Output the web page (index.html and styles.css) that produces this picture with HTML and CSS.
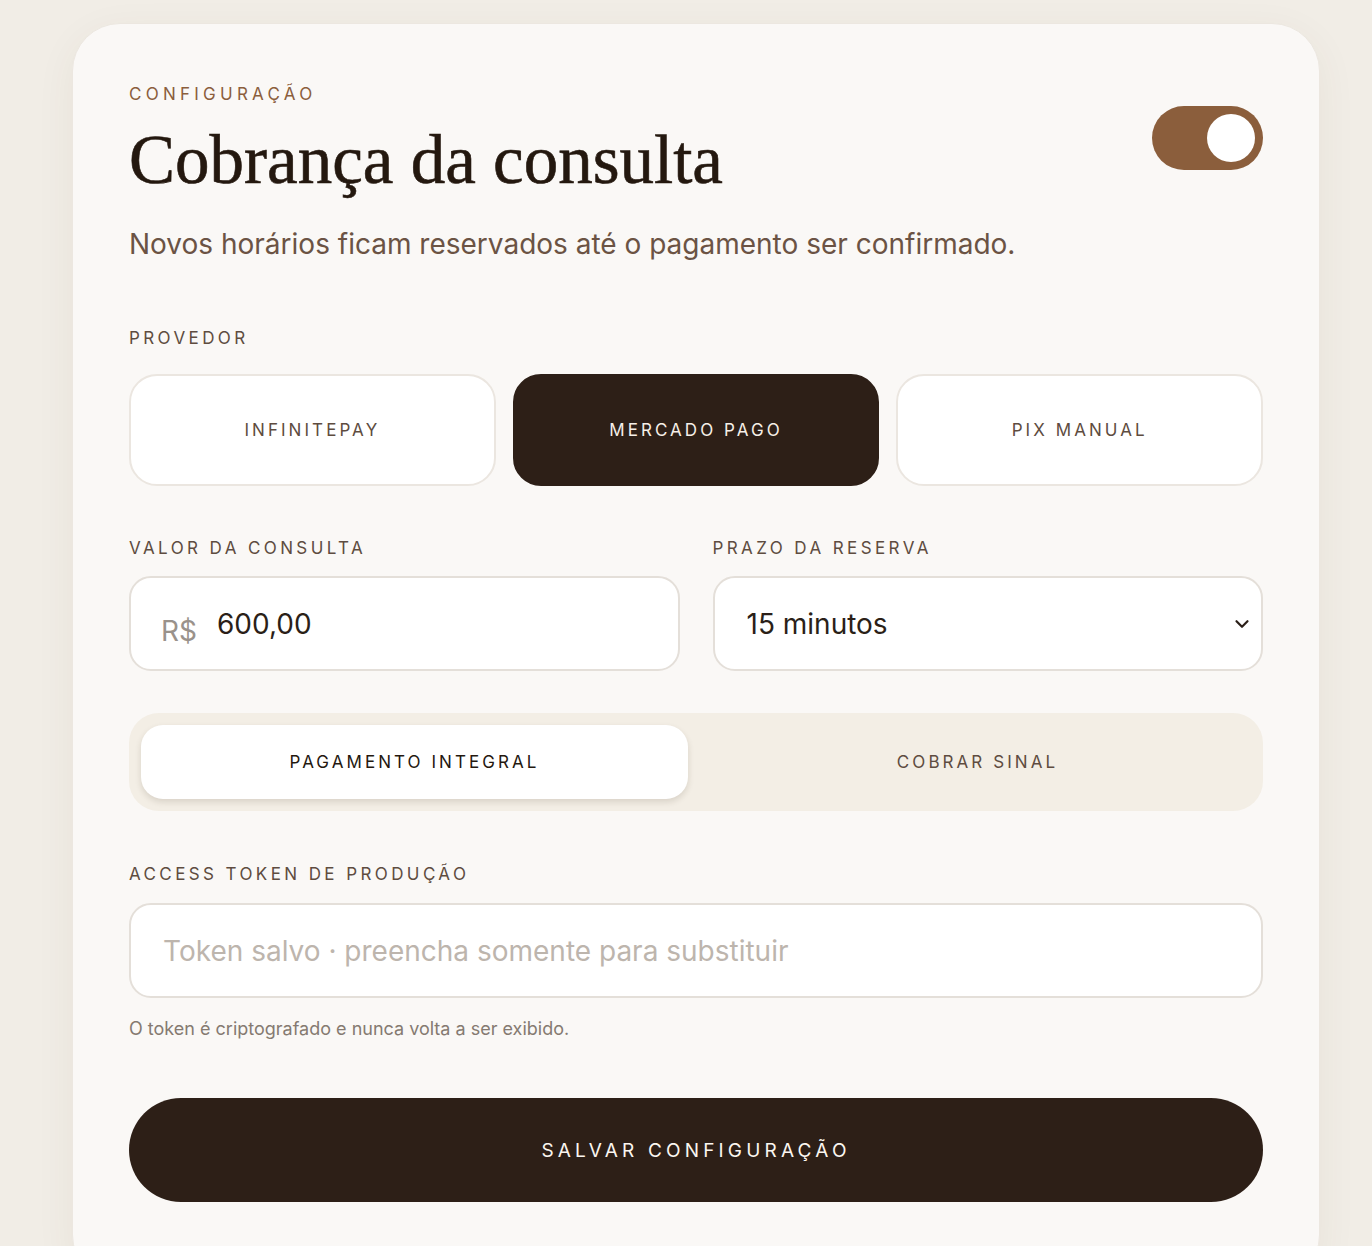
FILE: index.html
```html
<!DOCTYPE html>
<html lang="pt-BR">
<head>
    <meta charset="UTF-8">
    <meta name="viewport" content="width=device-width, initial-scale=1.0">
    <title>Cobrança da consulta</title>
    <link rel="stylesheet" href="styles.css">
</head>
<body>
    <div class="panel">
        <div class="panel-head">
            <div>
                <div class="eyebrow">Configuração</div>
                <h1>Cobrança da consulta</h1>
            </div>
            <div class="toggle on"><span class="knob"></span></div>
        </div>
        <p class="lead">Novos horários ficam reservados até o pagamento ser confirmado.</p>

        <div class="field-label">Provedor</div>
        <div class="providers">
            <button class="provider">InfinitePay</button>
            <button class="provider active">Mercado Pago</button>
            <button class="provider">Pix manual</button>
        </div>

        <div class="row">
            <div class="col">
                <div class="field-label">Valor da consulta</div>
                <div class="box">
                    <span class="prefix">R$</span>
                    <span class="value">600,00</span>
                </div>
            </div>
            <div class="col">
                <div class="field-label">Prazo da reserva</div>
                <div class="box select">
                    <span class="value">15 minutos</span>
                    <svg class="chevron" width="22" height="22" viewBox="0 0 24 24" fill="none" stroke="#2b1f18" stroke-width="2.4" stroke-linecap="round" stroke-linejoin="round"><path d="M6 9l6 6 6-6"/></svg>
                </div>
            </div>
        </div>

        <div class="segmented">
            <div class="seg selected">Pagamento integral</div>
            <div class="seg">Cobrar sinal</div>
        </div>

        <div class="field-label after-seg">Access token de produção</div>
        <div class="box token">
            <span class="placeholder">Token salvo · preencha somente para substituir</span>
        </div>
        <small class="hint">O token é criptografado e nunca volta a ser exibido.</small>

        <button class="save">Salvar configuração</button>
    </div>
</body>
</html>
```

FILE: styles.css
```css
body {
    margin: 0;
    background: #f1ede6;
    font-family: Inter, "Noto Sans", sans-serif;
    height: 1246px;
    overflow: hidden;
}
.panel {
    margin: 23px 0 0 72px;
    width: 1248px;
    box-sizing: border-box;
    padding: 60px 56px 80px;
    background: #faf8f6;
    border: 1px solid #ece7e0;
    border-radius: 48px;
    box-shadow: 0 10px 40px rgba(80, 60, 40, 0.06);
}
.panel-head {
    display: flex;
    justify-content: space-between;
    align-items: flex-start;
}
.eyebrow {
    font-size: 17px;
    letter-spacing: 0.25em;
    text-transform: uppercase;
    color: #8b5e3c;
}
h1 {
    font-family: "Liberation Serif", "DejaVu Serif", serif;
    font-weight: normal;
    font-size: 69px;
    line-height: 1;
    color: #24180f;
    -webkit-text-stroke: 0.6px #24180f;
    margin: 22px 0 0;
}
.toggle {
    width: 111px;
    height: 64px;
    border-radius: 32px;
    background: #d8cfc5;
    margin-top: 22px;
    display: flex;
    align-items: center;
    padding: 0 8px;
    box-sizing: border-box;
}
.toggle.on {
    background: #8b5e3c;
    justify-content: flex-end;
}
.knob {
    width: 48px;
    height: 48px;
    border-radius: 50%;
    background: #fff;
}
.lead {
    font-size: 28px;
    color: #6b5344;
    margin: 32px 0 0;
}
.field-label {
    font-size: 17px;
    letter-spacing: 0.2em;
    text-transform: uppercase;
    color: #5e4c40;
    margin: 67px 0 18px;
}
.field-label.after-seg {
    margin-top: 53px;
    margin-bottom: 19px;
}
.providers {
    display: grid;
    grid-template-columns: 1fr 1fr 1fr;
    gap: 17px;
    margin-top: 26px;
}
.provider {
    height: 112px;
    border: 2px solid #ebe6e0;
    border-radius: 28px;
    background: #fff;
    font-family: inherit;
    font-size: 17px;
    letter-spacing: 0.18em;
    text-transform: uppercase;
    color: #5e4c40;
}
.provider.active {
    background: #2d1f17;
    border-color: #2d1f17;
    color: #f6efe8;
}
.row {
    display: grid;
    grid-template-columns: 1fr 1fr;
    gap: 33px;
}
.row .field-label {
    margin-top: 52px;
}
.box {
    height: 95px;
    box-sizing: border-box;
    border: 2px solid #e4dfd9;
    border-radius: 22px;
    background: #fff;
    display: flex;
    align-items: center;
    padding: 0 32px 0 30px;
}
.prefix {
    font-size: 28px;
    color: #9a928b;
    margin-right: 20px;
    padding-top: 14px;
}
.value {
    font-size: 28px;
    color: #2b1f18;
}
.select {
    justify-content: space-between;
    padding: 0 8px 0 32px;
}
.segmented {
    margin-top: 42px;
    height: 98px;
    box-sizing: border-box;
    padding: 12px;
    border-radius: 30px;
    background: #f3eee5;
    display: grid;
    grid-template-columns: 1fr 1fr;
    gap: 16px;
}
.seg {
    display: flex;
    align-items: center;
    justify-content: center;
    border-radius: 22px;
    font-size: 17px;
    letter-spacing: 0.18em;
    text-transform: uppercase;
    color: #5e4c40;
}
.seg.selected {
    background: #fff;
    color: #24180f;
    box-shadow: 0 3px 6px rgba(60, 40, 20, 0.14);
}
.token {
    padding-left: 32px;
}
.placeholder {
    font-size: 28px;
    color: #bdb5ad;
}
.hint {
    display: block;
    margin-top: 20px;
    font-size: 18px;
    color: #857a71;
}
.save {
    display: block;
    width: 100%;
    height: 104px;
    margin-top: 59px;
    border: none;
    border-radius: 52px;
    background: #2d1f17;
    color: #fbf6f0;
    font-family: inherit;
    font-size: 19px;
    letter-spacing: 0.22em;
    text-transform: uppercase;
}
```
